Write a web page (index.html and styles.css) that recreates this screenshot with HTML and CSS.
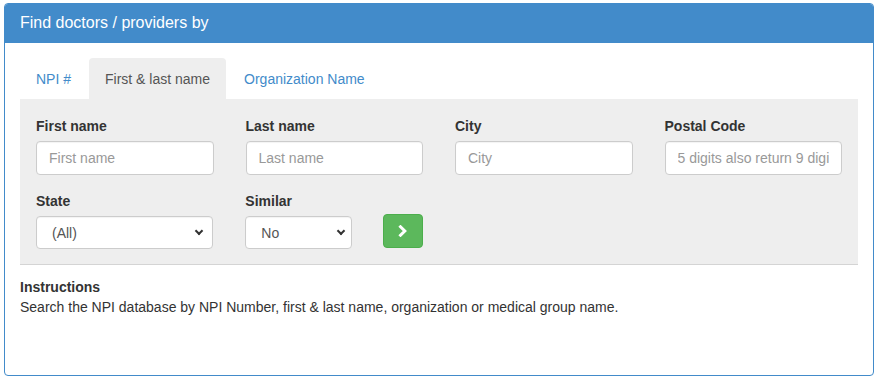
FILE: index.html
```html
<!DOCTYPE html>
<html lang="en">
<head>
  <meta charset="UTF-8">
  <title>Find doctors / providers</title>
  <link rel="stylesheet" href="styles.css">
</head>
<body>

  <div class="panel">
    <div class="panel-heading">
      <h3 class="panel-title">Find doctors / providers by</h3>
    </div>
    <div class="panel-body">

      <ul class="nav-tabs">
        <li><a href="#">NPI #</a></li>
        <li class="active"><a href="#">First &amp; last name</a></li>
        <li><a href="#">Organization Name</a></li>
      </ul>

      <div class="tab-content">
        <form class="search-form" onsubmit="return false">
          <div class="form-row">
            <div class="form-group">
              <label for="firstName">First name</label>
              <input class="form-control" id="firstName" type="text" placeholder="First name">
            </div>
            <div class="form-group">
              <label for="lastName">Last name</label>
              <input class="form-control" id="lastName" type="text" placeholder="Last name">
            </div>
            <div class="form-group">
              <label for="city">City</label>
              <input class="form-control" id="city" type="text" placeholder="City">
            </div>
            <div class="form-group">
              <label for="postal">Postal Code</label>
              <input class="form-control" id="postal" type="text" placeholder="5 digits also return 9 digits">
            </div>
          </div>

          <div class="form-row">
            <div class="form-group">
              <label for="state">State</label>
              <div class="select-wrap">
                <select class="form-control" id="state">
                  <option>(All)</option>
                </select>
              </div>
            </div>
            <div class="form-group form-group-inline">
              <div class="similar">
                <label for="similar">Similar</label>
                <div class="select-wrap select-small">
                  <select class="form-control" id="similar">
                    <option>No</option>
                    <option>Yes</option>
                  </select>
                </div>
              </div>
              <button class="btn btn-success" type="submit" aria-label="Search">
                <svg width="10" height="12" viewBox="0 0 10 12">
                  <polyline points="2.5,1.8 6.8,6 2.5,10.2" fill="none" stroke="#fff" stroke-width="3" stroke-linecap="square"/>
                </svg>
              </button>
            </div>
          </div>
        </form>
      </div>

      <div class="instructions">
        <strong>Instructions</strong>
        <p>Search the NPI database by NPI Number, first &amp; last name, organization or medical group name.</p>
      </div>

    </div>
  </div>

</body>
</html>
```

FILE: styles.css
```css
:root {
  --primary: #428bca;
  --gray-bg: #eeeeee;
  --border: #dddddd;
  --text: #333333;
}

html, body {
  margin: 0;
  padding: 0;
  background: #fff;
  font-family: "Liberation Sans", Arial, Helvetica, sans-serif;
  font-size: 14px;
  line-height: 20px;
  color: var(--text);
}

body {
  padding: 3px 10px 4px 4px;
}

.panel {
  border: 1px solid var(--primary);
  border-radius: 4px;
  height: 373px;
  box-sizing: border-box;
  overflow: hidden;
}

.panel-heading {
  background: var(--primary);
  color: #fff;
  padding: 10px 15px 10px;
  height: 39px;
  box-sizing: border-box;
}

.panel-title {
  margin: 0;
  font-size: 16px;
  font-weight: normal;
  line-height: 18px;
}

.panel-body {
  padding: 15px 15px;
}

/* Tabs */
.nav-tabs {
  list-style: none;
  margin: 0;
  padding: 0;
  display: flex;
}

.nav-tabs li {
  margin-right: 2px;
}

.nav-tabs a {
  display: block;
  padding: 10px 15px;
  border: 1px solid transparent;
  border-bottom: 0;
  border-radius: 4px 4px 0 0;
  color: var(--primary);
  text-decoration: none;
}

.nav-tabs li.active a {
  background: var(--gray-bg);
  color: #555;
}

.tab-content {
  background: var(--gray-bg);
  border-bottom: 1px solid #d4d4d4;
  padding: 17px 16px 15px;
}

/* Form */
.form-row {
  display: grid;
  grid-template-columns: repeat(4, 1fr);
  column-gap: 32px;
}

.form-row + .form-row {
  margin-top: 16px;
}

.form-group label {
  display: block;
  font-weight: bold;
  margin-bottom: 5px;
}

.form-group-inline {
  display: flex;
  align-items: flex-end;
  gap: 31px;
}

.form-control {
  display: block;
  width: 100%;
  height: 34px;
  padding: 6px 12px;
  box-sizing: border-box;
  font-family: inherit;
  font-size: 14px;
  color: #555;
  background: #fff;
  border: 1px solid #ccc;
  border-radius: 4px;
  box-shadow: inset 0 1px 1px rgba(0, 0, 0, 0.05);
}

.form-control::placeholder {
  color: #999;
}

select.form-control {
  appearance: none;
  -webkit-appearance: none;
  padding-left: 15px;
  height: 33px;
}

.select-wrap {
  position: relative;
}

.select-wrap::after {
  content: "";
  position: absolute;
  right: 11px;
  top: 12px;
  width: 4px;
  height: 4px;
  border-right: 2px solid #333;
  border-bottom: 2px solid #333;
  transform: rotate(45deg);
  pointer-events: none;
}

.select-small {
  width: 107px;
}

.select-small::after {
  right: 8px;
}

.btn {
  display: flex;
  align-items: center;
  justify-content: center;
  width: 40px;
  height: 34px;
  padding: 0;
  border-radius: 4px;
  cursor: pointer;
  margin-bottom: 1px;
}

.btn-success {
  background: #5cb85c;
  border: 1px solid #4cae4c;
}

/* Instructions */
.instructions {
  margin-top: 12px;
}

.instructions strong {
  display: block;
}

.instructions p {
  margin: 0;
}
```
